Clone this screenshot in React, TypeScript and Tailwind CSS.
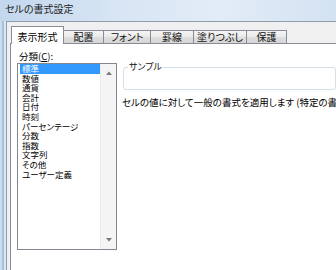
const items = [
  "標準",
  "数値",
  "通貨",
  "会計",
  "日付",
  "時刻",
  "パーセンテージ",
  "分数",
  "指数",
  "文字列",
  "その他",
  "ユーザー定義",
];

const tabs = [
  { label: "配置", w: "w-[40px]" },
  { label: "フォント", w: "w-[47px]" },
  { label: "罫線", w: "w-[43px]" },
  { label: "塗りつぶし", w: "w-[53px]" },
  { label: "保護", w: "w-[40px]" },
];

export default function App() {
  return (
    <div className="w-[336px] h-[270px] overflow-hidden flex flex-col bg-[linear-gradient(90deg,#c3d7ed,#d7e5f4_35%,#e2ecf7_65%,#d3e2f2)] font-['Noto_Sans_CJK_JP',sans-serif] text-black [font-feature-settings:'palt']">
      {/* タイトルバー */}
      <div className="h-[21px] shrink-0 pl-[5px] pt-[3px] text-[10px] leading-[12px] text-[#222]">
        セルの書式設定
      </div>

      <div className="flex flex-1 min-h-0">
        {/* 窓枠 */}
        <div className="w-[6px] shrink-0 bg-[linear-gradient(90deg,#cadcef_0_2px,#a9c0da_2px_4px,#dbe7f4_4px)]" />

        <div className="flex-1 flex flex-col min-w-0 bg-[#f0f0f0] border-l border-t border-[#8e9cad] pl-[3px] pt-[4px]">
          {/* タブ */}
          <div className="flex items-end h-[17px] shrink-0">
            <div className="relative z-10 ml-[1px] mb-[-1px] w-[53px] h-[18px] bg-white border border-b-0 border-[#898c95] text-center text-[10px] leading-[12px] pt-[4px]">
              表示形式
            </div>
            {tabs.map((t) => (
              <div
                key={t.label}
                className={`${t.w} h-[13px] border-t border-r border-[#898c95] bg-[linear-gradient(#f5f5f5,#ebebeb_45%,#dedede_55%,#d6d6d6)] text-center text-[10px] leading-[12px] text-[#111]`}
              >
                {t.label}
              </div>
            ))}
          </div>

          {/* パネル */}
          <div className="flex-1 flex bg-white border-l border-t border-[#898c95] min-w-0">
            <div className="flex flex-col pl-[6px] pt-[6px] shrink-0">
              <div className="pl-[2px] text-[9.5px] leading-[12px]">
                分類(<span className="underline">C</span>):
              </div>
              <div className="mt-[1px] w-[100px] h-[187px] border border-[#828790] flex">
                <div className="flex-1 pl-[2px]">
                  {items.map((it, i) => (
                    <div
                      key={it}
                      className={`h-[9.6px] pl-[2px] text-[8.5px] leading-[9.6px] whitespace-nowrap ${
                        i === 0 ? "bg-[#3399ff] text-white" : "text-black"
                      }`}
                    >
                      {it}
                    </div>
                  ))}
                </div>
                <div className="w-[16px] bg-[#f4f4f4] border-l border-[#ececec] flex flex-col items-center justify-between pt-[7px] pb-[7px]">
                  <svg width="6" height="4" viewBox="0 0 6 4">
                    <path d="M0 4 L3 0.5 L6 4 Z" fill="#7a7a7a" />
                  </svg>
                  <svg width="6" height="4" viewBox="0 0 6 4">
                    <path d="M0 0 L3 3.5 L6 0 Z" fill="#7a7a7a" />
                  </svg>
                </div>
              </div>
            </div>

            <div className="flex flex-col ml-[6px] pt-[18px] min-w-0 flex-1">
              <fieldset className="h-[28px] border border-[#d5dfe5] rounded-[3px]">
                <legend className="ml-[4px] px-[1px] text-[9px] leading-[10px] text-[#111]">
                  サンプル
                </legend>
              </fieldset>
              <div className="mt-[6px] -ml-[1px] whitespace-nowrap text-[9.5px] leading-[12px]">
                セルの値に対して一般の書式を適用します (特定の書式
              </div>
            </div>
          </div>
        </div>
      </div>
    </div>
  );
}
